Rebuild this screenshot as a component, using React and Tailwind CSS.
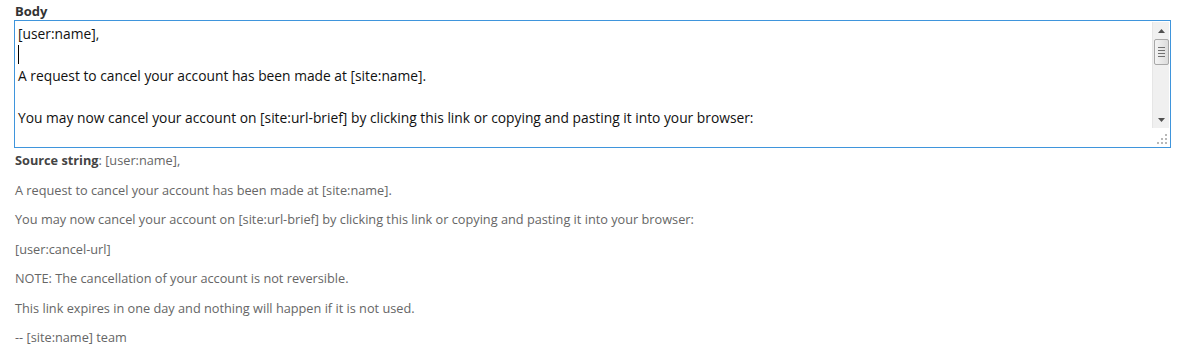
const lines = [
  "[user:name],",
  null,
  "A request to cancel your account has been made at [site:name].",
  "",
  "You may now cancel your account on [site:url-brief] by clicking this link or copying and pasting it into your browser:",
];

const source = [
  "A request to cancel your account has been made at [site:name].",
  "You may now cancel your account on [site:url-brief] by clicking this link or copying and pasting it into your browser:",
  "[user:cancel-url]",
  "NOTE: The cancellation of your account is not reversible.",
  "This link expires in one day and nothing will happen if it is not used.",
  "-- [site:name] team",
];

function Scrollbar() {
  return (
    <div className="w-[17px] h-[106px] bg-[#f0f0f0] border-l border-[#e6e6e6] flex flex-col items-center">
      {/* up arrow */}
      <div className="h-[17px] w-full flex items-center justify-center">
        <svg width="7" height="4" viewBox="0 0 7 4"><path d="M3.5 0L7 4H0z" fill="#505050" /></svg>
      </div>
      {/* thumb */}
      <div className="w-[15px] h-[26px] rounded-[2px] border border-[#a8a8a8] bg-gradient-to-r from-[#f4f4f4] via-[#e8e8e8] to-[#dcdcdc] flex flex-col items-center justify-center gap-[2px]">
        <div className="w-[7px] h-px bg-[#707070]" />
        <div className="w-[7px] h-px bg-[#707070]" />
        <div className="w-[7px] h-px bg-[#707070]" />
        <div className="w-[7px] h-px bg-[#707070]" />
      </div>
      <div className="flex-1" />
      {/* down arrow */}
      <div className="h-[17px] w-full flex items-center justify-center">
        <svg width="7" height="4" viewBox="0 0 7 4"><path d="M0 0H7L3.5 4z" fill="#505050" /></svg>
      </div>
    </div>
  );
}

function Grip() {
  const dot = "w-[2px] h-[2px] bg-[#b8b8b8]";
  return (
    <div className="grid grid-cols-3 gap-[2px] w-[10px]">
      <span />
      <span />
      <span className={dot} />
      <span />
      <span className={dot} />
      <span className={dot} />
      <span className={dot} />
      <span className={dot} />
      <span className={dot} />
    </div>
  );
}

export default function App() {
  return (
    <div className="min-h-[359px] bg-white pl-[14px] pr-[15px] text-[#333]" style={{ fontFamily: "'Open Sans', sans-serif" }}>
      {/* Label */}
      <div className="pt-[2px] pl-px text-[13px] leading-[18px] font-bold text-[#333]">Body</div>

      {/* Textarea */}
      <div className="h-[128px] border border-[#3f95dc] flex">
        <div className="flex-1 pt-[2px] pl-[3px] text-[13.8px] leading-[21px] text-[#111] whitespace-nowrap overflow-hidden">
          {lines.map((l, i) =>
            l === null ? (
              <div key={i} className="h-[21px] flex items-center">
                <span className="w-px h-[19px] bg-black" />
              </div>
            ) : (
              <div key={i} className="h-[21px]">{l}</div>
            )
          )}
        </div>
        <div className="flex flex-col items-end pt-px pr-px">
          <Scrollbar />
          <div className="flex-1 flex items-end pb-[3px] pr-[2px]">
            <Grip />
          </div>
        </div>
      </div>

      {/* Description */}
      <div className="mt-[3px] pl-px flex flex-col gap-[11.5px] text-[12.74px] leading-[18px] text-[#666]">
        <p>
          <strong className="font-bold text-[#444]">Source string</strong>: [user:name],
        </p>
        {source.map((t, i) => (
          <p key={i}>{t}</p>
        ))}
      </div>
    </div>
  );
}
